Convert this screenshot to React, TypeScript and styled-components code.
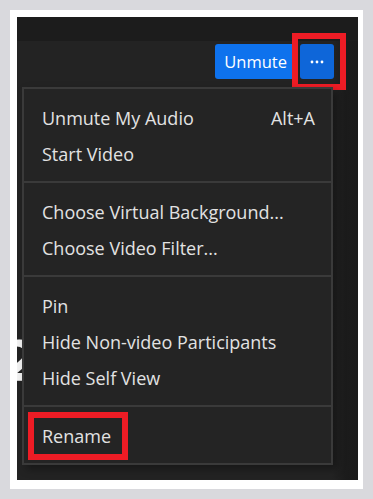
import styled, { createGlobalStyle } from 'styled-components';

const GlobalStyle = createGlobalStyle`
  html, body {
    margin: 0;
    padding: 0;
    background: #d9d9dd;
  }
  * {
    box-sizing: border-box;
  }
`;

const Page = styled.div`
  width: 373px;
  height: 499px;
  padding: 10px;
  background: #d9d9dd;
  font-family: 'Open Sans', 'Noto Sans', sans-serif;
`;

const Frame = styled.div`
  height: 100%;
  background: #ffffff;
  padding: 7px 5px 9px 7px;
`;

const Canvas = styled.div`
  position: relative;
  height: 100%;
  display: flex;
  flex-direction: column;
  overflow: hidden;
  background: linear-gradient(to left, #1a1a1a 0, #1b1b1b 12px, #232323 26px);
`;

const TopBar = styled.div`
  height: 24px;
  flex: none;
  background: #1c1c1c;
`;

const Toolbar = styled.div`
  display: flex;
  justify-content: flex-end;
  gap: 4px;
  padding: 3px 24px 0 0;
  height: 38px;
  flex: none;
`;

const Button = styled.button<{ $dark?: boolean }>`
  position: relative;
  height: 35px;
  border: none;
  border-radius: 3px;
  padding: ${(p) => (p.$dark ? '0' : '0 9px')};
  width: ${(p) => (p.$dark ? '34px' : 'auto')};
  background: ${(p) => (p.$dark ? '#0e66d9' : '#0e72ed')};
  color: #ffffff;
  font-family: inherit;
  font-size: 16.5px;
  display: flex;
  align-items: center;
  justify-content: center;
`;

const Annotation = styled.span<{ $top: number; $left: number; $w: number; $h: number }>`
  position: absolute;
  top: ${(p) => p.$top}px;
  left: ${(p) => p.$left}px;
  width: ${(p) => p.$w}px;
  height: ${(p) => p.$h}px;
  border: 6px solid #ee1c25;
  pointer-events: none;
`;

const Body = styled.div`
  flex: 1;
  position: relative;
  padding: 8px 0 0 5px;
`;

const BehindGlyph = styled.div`
  position: absolute;
  left: -16px;
  top: 254px;
  font-family: 'DejaVu Sans', sans-serif;
  font-size: 56px;
  font-weight: 700;
  color: #f2f2f2;
  line-height: 1;
`;

const Menu = styled.div`
  position: relative;
  width: 311px;
  background: #242424;
  border: 2px solid #3a3a3a;
  box-shadow: 4px 4px 8px rgba(0, 0, 0, 0.35);
`;

const Section = styled.div`
  padding: 11px 0 9px;
  & + & {
    border-top: 2px solid #3a3a3a;
  }
`;

const Item = styled.div`
  position: relative;
  height: 36px;
  display: flex;
  align-items: center;
  justify-content: space-between;
  padding: 0 16px 0 18px;
  color: #e2e2e2;
  font-size: 18px;
`;

const Shortcut = styled.span`
  color: #e2e2e2;
`;

const Dots = () => (
  <svg width="14" height="4" viewBox="0 0 14 4">
    <circle cx="2" cy="2" r="1.4" fill="#fff" />
    <circle cx="7" cy="2" r="1.4" fill="#fff" />
    <circle cx="12" cy="2" r="1.4" fill="#fff" />
  </svg>
);

const sections: { label: string; shortcut?: string; marked?: boolean }[][] = [
  [{ label: 'Unmute My Audio', shortcut: 'Alt+A' }, { label: 'Start Video' }],
  [{ label: 'Choose Virtual Background...' }, { label: 'Choose Video Filter...' }],
  [{ label: 'Pin' }, { label: 'Hide Non-video Participants' }, { label: 'Hide Self View' }],
  [{ label: 'Rename', marked: true }],
];

const App = () => {
  return (
    <Page>
      <GlobalStyle />
      <Frame>
        <Canvas>
          <TopBar />
          <Toolbar>
            <Button>Unmute</Button>
            <Button $dark>
              <Dots />
              <Annotation $top={-11} $left={-8} $w={54} $h={57} />
            </Button>
          </Toolbar>
          <Body>
            <BehindGlyph>2</BehindGlyph>
            <Menu>
              {sections.map((items, i) => (
                <Section key={i}>
                  {items.map((it) => (
                    <Item key={it.label}>
                      <span>{it.label}</span>
                      {it.shortcut && <Shortcut>{it.shortcut}</Shortcut>}
                      {it.marked && <Annotation $top={-6} $left={4} $w={100} $h={48} />}
                    </Item>
                  ))}
                </Section>
              ))}
            </Menu>
          </Body>
        </Canvas>
      </Frame>
    </Page>
  );
};

export default App;
